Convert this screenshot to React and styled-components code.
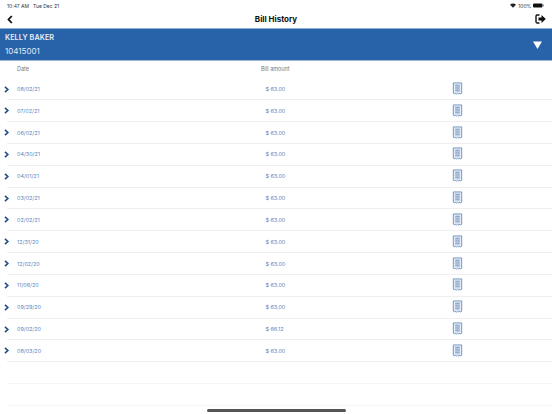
import React from "react";
import styled, { createGlobalStyle } from "styled-components";

const Global = createGlobalStyle`
  html, body { margin: 0; padding: 0; background: #fff; }
  body { font-family: "Inter", "Liberation Sans", sans-serif; }
`;
const Page = styled.div`
  width: 552px; height: 414px; overflow: hidden; position: relative; background: #fff;
  display: flex; flex-direction: column;
`;
const StatusBar = styled.div`
  height: 10px; padding: 0 8px 0 7px; display: flex; align-items: center; justify-content: space-between;
  font-size: 5px; color: #333;
`;
const StatusLeft = styled.div`display: flex; gap: 4px; margin-top: 1px;`;
const StatusRight = styled.div`display: flex; gap: 1.5px; align-items: center; margin-top: 1px;`;
const NavBar = styled.div`
  height: 18px; padding: 0 6px 0 7px; display: flex; align-items: center; justify-content: space-between;
  position: relative;
`;
const NavTitle = styled.div`
  position: absolute; left: 0; right: 0; text-align: center; font-size: 8px; font-weight: 700; color: #111; line-height: 18px;
`;
const Banner = styled.div`
  height: 31px; background: #2862a8; border-top: 1px solid #8fb0d2; border-bottom: 1px solid #9db9d8;
  display: flex; align-items: center; justify-content: space-between; padding: 0 10px 0 5px; color: #fff;
`;
const Customer = styled.div`display: flex; flex-direction: column; gap: 5px;`;
const Name = styled.div`font-size: 7.2px; font-weight: 600; line-height: 9px; letter-spacing: 0.1px; color: #e8eff8;`;
const Account = styled.div`font-size: 8px; line-height: 9px; color: #e2ebf6;`;
const HeadRow = styled.div`
  height: 16.5px; padding: 0 0 1px 17px; display: grid; grid-template-columns: 244px 190px 1fr; align-items: center;
  font-size: 5.5px; color: #777;
`;
const Row = styled.div`
  height: 20.83px; border-bottom: 1px solid ${p => p.$faint ? "#f6f6f6" : "#efefef"}; margin-left: 7px; position: relative;
  display: grid; grid-template-columns: 243.5px 191.5px 1fr; padding-left: 10px; align-items: center;
  font-size: 5.4px; color: #5a85c0; box-sizing: content-box;
`;
const Chevron = styled.svg`position: absolute; left: -3px; top: 7px;`;
const Amount = styled.div`padding-left: 5px;`;
const ReceiptIcon = styled.svg`margin-top: -1px; display: block;`;
const Home = styled.div`
  position: absolute; left: 207px; bottom: 2px; width: 139px; height: 3px; border-radius: 2px; background: #555;
`;

const Receipt = () => (
  <ReceiptIcon width="11" height="13" viewBox="0 0 11 14">
    <path d="M1 1h9v11l-1 1-1-1-1 1-1.500-1-1 1-1.500-1-1 1-1-1z" fill="#e6edf6" stroke="#5f86b9" strokeWidth="0.9" />
    <path d="M3 3.500h5M3 5.500h5M3 7.500h5M3 9.500h5" stroke="#4673ac" strokeWidth="0.8" />
  </ReceiptIcon>
);

const data = [
  ["08/02/21", "63.00"], ["07/02/21", "63.00"], ["06/02/21", "63.00"], ["04/30/21", "63.00"],
  ["04/01/21", "63.00"], ["03/02/21", "63.00"], ["02/02/21", "63.00"], ["12/31/20", "63.00"],
  ["12/02/20", "63.00"], ["11/06/20", "63.00"], ["09/29/20", "63.00"], ["09/02/20", "66.12"],
  ["08/03/20", "63.00"],
];

export default function App() {
  return (
    <Page>
      <Global />
      <StatusBar>
        <StatusLeft><span>10:47 AM</span><span>Tue Dec 21</span></StatusLeft>
        <StatusRight>
          <svg width="6" height="5" viewBox="0 0 12 10"><path d="M6 9.500L0 3.500C3.500 0 8.500 0 12 3.500z" fill="#222" /></svg>
          <span style={{ marginLeft: 1 }}>100%</span>
          <svg width="11" height="5" viewBox="0 0 22 10"><rect x="0" y="1" width="19" height="8" rx="2" fill="#111" /><rect x="20" y="3.500" width="1.500" height="3" fill="#555" /></svg>
        </StatusRight>
      </StatusBar>
      <NavBar>
        <svg width="6" height="9" viewBox="0 0 6 9"><path d="M4.800 1L1.500 4.500 4.800 8" fill="none" stroke="#111" strokeWidth="1.800" /></svg>
        <NavTitle>Bill History</NavTitle>
        <svg width="11" height="10" viewBox="0 0 11 10">
          <path d="M4.500 1H2A1.200 1.200 0 0 0 1 2v6a1.200 1.200 0 0 0 1 1h2.500" fill="none" stroke="#111" strokeWidth="1.400" />
          <path d="M3.500 3.500H6.500V1L10.800 5 6.500 9V6.500H3.500z" fill="#111" />
        </svg>
      </NavBar>
      <Banner>
        <Customer>
          <Name>KELLY BAKER</Name>
          <Account>10415001</Account>
        </Customer>
        <svg width="9" height="8" viewBox="0 0 9 8"><path d="M0 0.500h9L4.500 8z" fill="#fff" /></svg>
      </Banner>
      <HeadRow><span>Date</span><span>Bill amount</span></HeadRow>
      {data.map(([d, a]) => (
        <Row key={d}>
          <Chevron width="5" height="7" viewBox="0 0 5 7"><path d="M1 0.800L3.800 3.500 1 6.200" fill="none" stroke="#244f86" strokeWidth="1.700" /></Chevron>
          <span>{d}</span>
          <Amount>$ {a}</Amount>
          <Receipt />
        </Row>
      ))}
      <Row $faint />
      <Row $faint />
      <Home />
    </Page>
  );
}
